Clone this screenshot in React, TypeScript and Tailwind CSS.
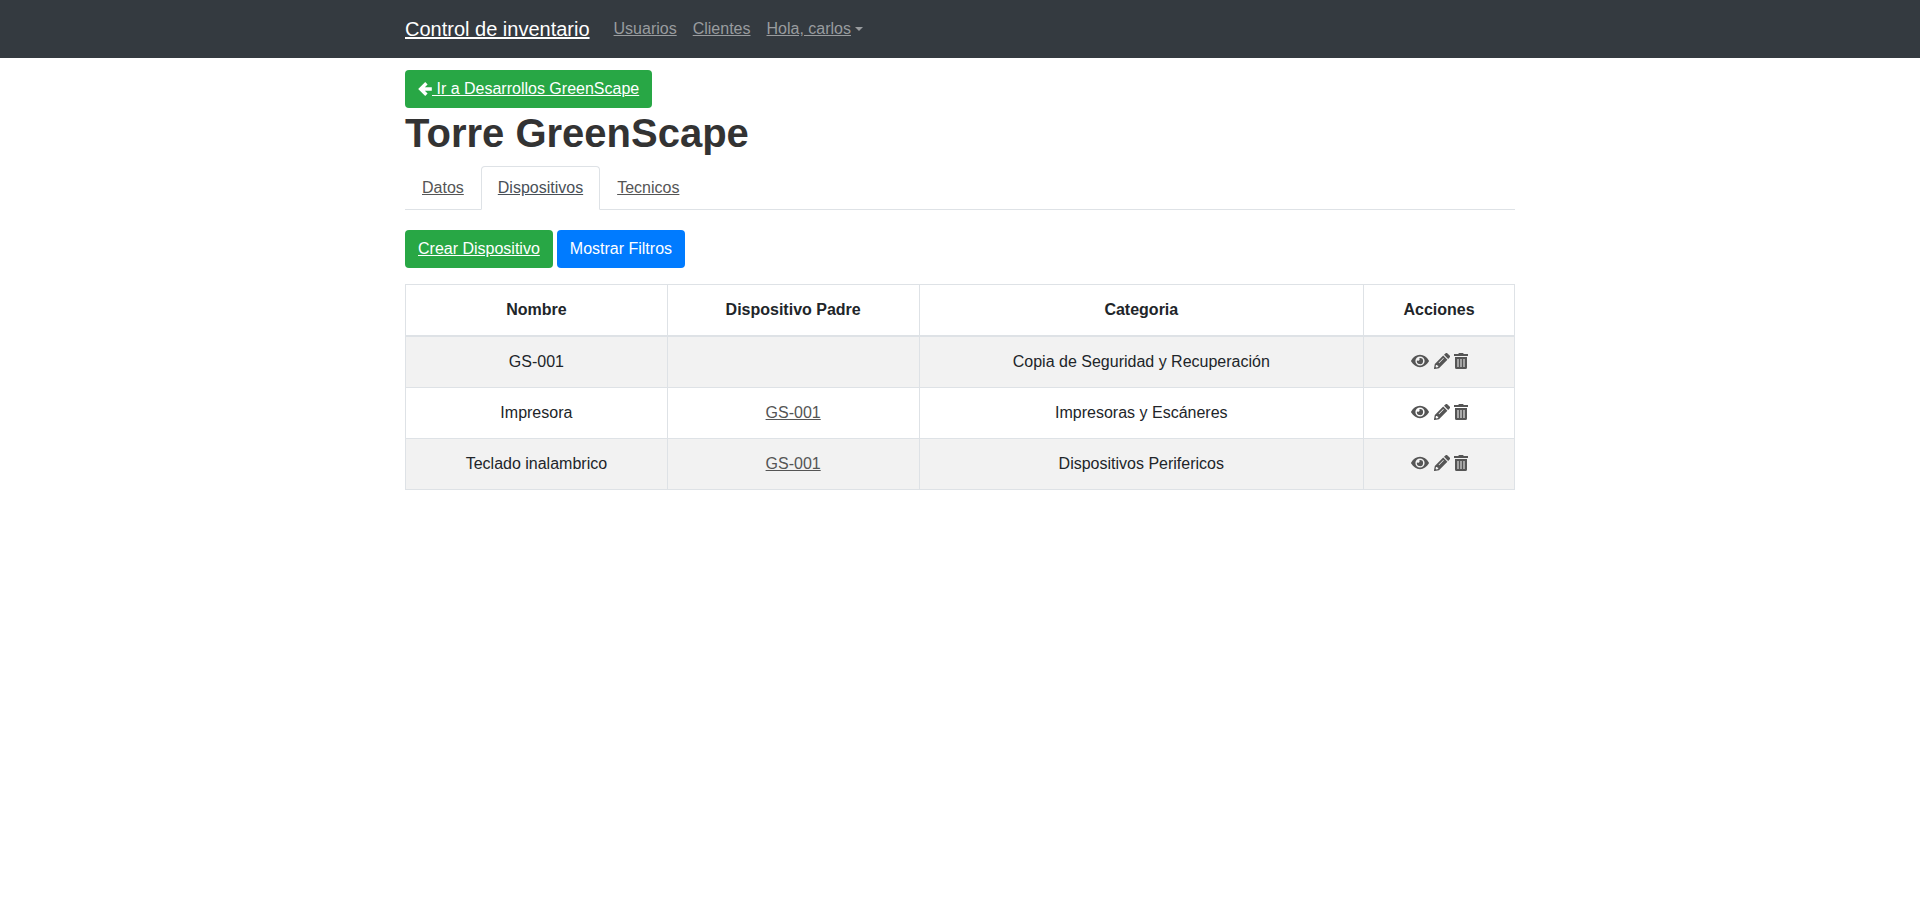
type Device = { name: string; parent?: string; category: string };

const devices: Device[] = [
  { name: "GS-001", category: "Copia de Seguridad y Recuperación" },
  { name: "Impresora", parent: "GS-001", category: "Impresoras y Escáneres" },
  { name: "Teclado inalambrico", parent: "GS-001", category: "Dispositivos Perifericos" },
];

const columns = [
  { title: "Nombre", width: "w-[262px]" },
  { title: "Dispositivo Padre", width: "w-[252px]" },
  { title: "Categoria", width: "w-[445px]" },
  { title: "Acciones", width: "w-[151px]" },
];

function ArrowLeftIcon() {
  return (
    <svg viewBox="0 0 14 16" className="h-4 w-[14px]" fill="none" stroke="currentColor" strokeWidth="3.4" aria-hidden="true">
      <path d="M8.400 2.200 2.600 8l5.800 5.800M3 8h10.800" />
    </svg>
  );
}

function EyeIcon() {
  return (
    <svg viewBox="0 0 19 16" className="h-4 w-[19px]" fill="currentColor" aria-hidden="true">
      <path
        fillRule="evenodd"
        d="M.2 7.400C2.200 3.900 5.400 1.800 9 1.800s6.800 2.100 8.800 5.600a1.200 1.200 0 0 1 0 1.200C15.800 12.100 12.600 14.200 9 14.200S2.200 12.100.2 8.600a1.200 1.200 0 0 1 0-1.200zM9 3.400a4.600 4.600 0 1 0 0 9.200 4.600 4.600 0 0 0 0-9.200z"
      />
      <path d="M9 4.900a3.100 3.100 0 1 1-3 2.300 1.500 1.500 0 0 0 2.200-2.200c.3-.1.500-.1.800-.1z" />
    </svg>
  );
}

function PencilIcon() {
  return (
    <svg viewBox="0 0 16 16" className="size-4" fill="currentColor" aria-hidden="true">
      <path d="M15.600 4.600 14.200 6 10 1.800 11.400.400a1.500 1.500 0 0 1 2.100 0l2.100 2.100a1.500 1.500 0 0 1 0 2.100z" />
      <path
        fillRule="evenodd"
        d="M9.200 2.600 13.400 6.800 5 15.200.700 16a.600.600 0 0 1-.7-.7L.8 11zM9.300 5.100 4.600 9.800l.5.500L9.800 5.600zM2 11.900 1.600 13.700l.700.700 1.900-.400v-1.300H3.300v-.8z"
      />
    </svg>
  );
}

function TrashIcon() {
  return (
    <svg viewBox="0 0 14 16" className="h-4 w-[14px]" fill="currentColor" aria-hidden="true">
      <path d="M0 1h4.200L5 0h4l.8 1H14v2H0z" />
      <path
        fillRule="evenodd"
        d="M1 4h12v10.500A1.500 1.500 0 0 1 11.500 16h-9A1.500 1.500 0 0 1 1 14.500zM3 6v8h2V6zM6 6v8h2V6zM9 6v8h2V6z"
      />
      <path opacity=".5" d="M3 6h2v8H3zM6 6h2v8H6zM9 6h2v8H9z" />
    </svg>
  );
}

function Navbar() {
  return (
    <header className="bg-[#343a40]">
      <nav className="mx-auto flex h-[58px] max-w-[1140px] items-center px-[15px]">
        <a href="#" className="mr-4 text-xl text-white underline">
          Control de inventario
        </a>
        <div className="flex text-[#999c9f]">
          <a href="#" className="px-2 underline">Usuarios</a>
          <a href="#" className="px-2 underline">Clientes</a>
          <a href="#" className="flex items-center gap-1 px-2">
            <span className="underline">Hola, carlos</span>
            <span className="border-x-[4px] border-t-[4px] border-x-transparent border-t-current" />
          </a>
        </div>
      </nav>
    </header>
  );
}

function Tabs() {
  return (
    <nav className="mt-2 flex border-b border-[#dee2e6] text-[#555]">
      <a href="#" className="-mb-px border border-transparent px-4 py-2 underline">Datos</a>
      <a
        href="#"
        aria-current="page"
        className="-mb-px rounded-t border border-[#dee2e6] border-b-white bg-white px-4 py-2 text-[#495057] underline"
      >
        Dispositivos
      </a>
      <a href="#" className="-mb-px border border-transparent px-4 py-2 underline">Tecnicos</a>
    </nav>
  );
}

function RowActions({ name }: { name: string }) {
  return (
    <div className="flex h-6 items-center justify-center gap-1 text-[#555]">
      <a href="#" aria-label={`Ver ${name}`}>
        <EyeIcon />
      </a>
      <a href="#" aria-label={`Editar ${name}`}>
        <PencilIcon />
      </a>
      <a href="#" aria-label={`Eliminar ${name}`}>
        <TrashIcon />
      </a>
    </div>
  );
}

function DeviceTable() {
  return (
    <table className="mt-4 w-full border-collapse border border-[#dee2e6] text-center">
      <thead>
        <tr>
          {columns.map((c) => (
            <th
              key={c.title}
              scope="col"
              className={`${c.width} border border-b-2 border-[#dee2e6] p-3 font-bold`}
            >
              {c.title}
            </th>
          ))}
        </tr>
      </thead>
      <tbody>
        {devices.map((d) => (
          <tr key={d.name} className="align-top odd:bg-[#f2f2f2]">
            <td className="border border-[#dee2e6] p-3">{d.name}</td>
            <td className="border border-[#dee2e6] p-3">
              {d.parent && (
                <a href="#" className="text-[#555] underline">{d.parent}</a>
              )}
            </td>
            <td className="border border-[#dee2e6] p-3">{d.category}</td>
            <td className="border border-[#dee2e6] p-3">
              <RowActions name={d.name} />
            </td>
          </tr>
        ))}
      </tbody>
    </table>
  );
}

export default function App() {
  return (
    <div className="min-h-screen bg-white font-['Liberation_Sans',Arial,sans-serif] text-base leading-[26px] text-[#212529]">
      <Navbar />
      <main className="mx-auto max-w-[1140px] px-[15px] pt-3">
        <a
          href="#"
          className="inline-flex h-[38px] items-center rounded bg-[#28a745] px-[13px] text-white"
        >
          <ArrowLeftIcon />
          <span className="whitespace-pre underline"> Ir a Desarrollos GreenScape</span>
        </a>
        <h1 className="text-[40px] leading-[50px] font-bold text-[#333]">Torre GreenScape</h1>
        <Tabs />
        <div className="mt-5 flex gap-1">
          <a
            href="#"
            className="flex h-[38px] items-center rounded bg-[#28a745] px-[13px] text-white underline"
          >
            Crear Dispositivo
          </a>
          <button
            type="button"
            className="flex h-[38px] items-center rounded bg-[#007bff] px-[13px] text-white"
          >
            Mostrar Filtros
          </button>
        </div>
        <DeviceTable />
      </main>
    </div>
  );
}
